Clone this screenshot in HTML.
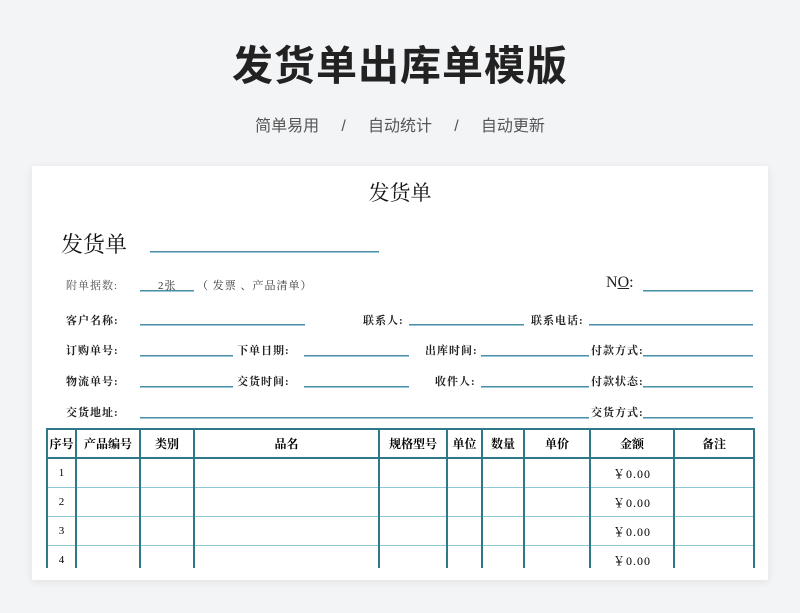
<!DOCTYPE html>
<html><head><meta charset="utf-8"><style>
body{margin:0;width:800px;height:613px;background:#f3f4f6;position:relative;overflow:hidden;font-family:"Liberation Serif","Noto Serif CJK SC",serif;}
.a{position:absolute;white-space:nowrap}
.h1{left:0;width:800px;text-align:center;top:32px;font:bold 41px "Liberation Sans","Noto Sans CJK SC",sans-serif;color:#222;letter-spacing:1px}
.sub{left:0;width:800px;text-align:center;top:112px;font:16px "Liberation Sans","Noto Sans CJK SC",sans-serif;color:#555}
.card{left:32px;top:166px;width:736px;height:414px;background:#fff;box-shadow:0 2px 8px rgba(0,0,0,.08)}
.l{position:absolute;height:1px;background:#4a8fa6;border-bottom:1px solid #9cc6d3}
.lb{position:absolute;font-size:11px;font-weight:bold;color:#222;white-space:nowrap;line-height:14px;letter-spacing:1px}
table{position:absolute;left:46px;top:428px;border-collapse:collapse;table-layout:fixed}
td{border:2px solid #2e7889;border-top:1px solid #8cc7d6;border-bottom:1px solid #8cc7d6;height:28px;text-align:center;font-size:11px;padding:0}
tr.hd td{border:2px solid #2e7889;font-weight:bold;font-size:12px;height:27px}
.clip{position:absolute;left:0;top:0;width:800px;height:568px;overflow:hidden}
.y{font-size:12px;letter-spacing:1px}
</style></head><body>
<div class="a h1">发货单出库单模版</div>
<div class="a sub">简单易用 &nbsp;&nbsp;&nbsp;&nbsp;/&nbsp;&nbsp;&nbsp;&nbsp; 自动统计 &nbsp;&nbsp;&nbsp;&nbsp;/&nbsp;&nbsp;&nbsp;&nbsp; 自动更新</div>
<div class="a card"></div>
<div class="a" style="left:0;width:800px;text-align:center;top:177px;font-size:21px;color:#111">发货单</div>
<div class="a" style="left:61px;top:228px;font-size:22px;color:#111">发货单</div>
<div class="l" style="left:150px;width:229px;top:251px"></div>
<div class="lb" style="left:66px;top:279px;font-weight:normal;color:#555">附单据数:</div>
<div class="l" style="left:140px;width:54px;top:290px"></div>
<div class="lb" style="left:158px;top:279px;font-weight:normal;color:#333">2张</div>
<div class="lb" style="left:197px;top:279px;font-weight:normal;color:#333">（ 发票 、产品清单）</div>
<div class="a" style="left:606px;top:274px;font-size:16px;color:#222">N<u>O</u>:</div>
<div class="l" style="left:643px;width:110px;top:290px"></div>

<div class="lb" style="left:66px;top:314px">客户名称:</div>
<div class="l" style="left:140px;width:165px;top:324px"></div>
<div class="lb" style="left:363px;top:314px">联系人:</div>
<div class="l" style="left:409px;width:115px;top:324px"></div>
<div class="lb" style="left:531px;top:314px">联系电话:</div>
<div class="l" style="left:589px;width:164px;top:324px"></div>

<div class="lb" style="left:66px;top:344px">订购单号:</div>
<div class="l" style="left:140px;width:93px;top:355px"></div>
<div class="lb" style="left:237px;top:344px">下单日期:</div>
<div class="l" style="left:304px;width:105px;top:355px"></div>
<div class="lb" style="left:425px;top:344px">出库时间:</div>
<div class="l" style="left:481px;width:108px;top:355px"></div>
<div class="lb" style="left:591px;top:344px">付款方式:</div>
<div class="l" style="left:643px;width:110px;top:355px"></div>

<div class="lb" style="left:66px;top:375px">物流单号:</div>
<div class="l" style="left:140px;width:93px;top:386px"></div>
<div class="lb" style="left:237px;top:375px">交货时间:</div>
<div class="l" style="left:304px;width:105px;top:386px"></div>
<div class="lb" style="left:435px;top:375px">收件人:</div>
<div class="l" style="left:481px;width:108px;top:386px"></div>
<div class="lb" style="left:591px;top:375px">付款状态:</div>
<div class="l" style="left:643px;width:110px;top:386px"></div>

<div class="lb" style="left:66px;top:406px">交货地址:</div>
<div class="l" style="left:140px;width:449px;top:417px"></div>
<div class="lb" style="left:591px;top:406px">交货方式:</div>
<div class="l" style="left:643px;width:110px;top:417px"></div>

<div class="clip">
<table>
<colgroup><col style="width:29px"><col style="width:64px"><col style="width:54px"><col style="width:185px"><col style="width:68px"><col style="width:35px"><col style="width:42px"><col style="width:66px"><col style="width:84px"><col style="width:80px"></colgroup>
<tr class="hd"><td>序号</td><td>产品编号</td><td>类别</td><td>品名</td><td>规格型号</td><td>单位</td><td>数量</td><td>单价</td><td>金额</td><td>备注</td></tr>
<tr><td>1</td><td></td><td></td><td></td><td></td><td></td><td></td><td></td><td class="y">￥0.00</td><td></td></tr>
<tr><td>2</td><td></td><td></td><td></td><td></td><td></td><td></td><td></td><td class="y">￥0.00</td><td></td></tr>
<tr><td>3</td><td></td><td></td><td></td><td></td><td></td><td></td><td></td><td class="y">￥0.00</td><td></td></tr>
<tr><td>4</td><td></td><td></td><td></td><td></td><td></td><td></td><td></td><td class="y">￥0.00</td><td></td></tr>
</table>
</div>
</body></html>
